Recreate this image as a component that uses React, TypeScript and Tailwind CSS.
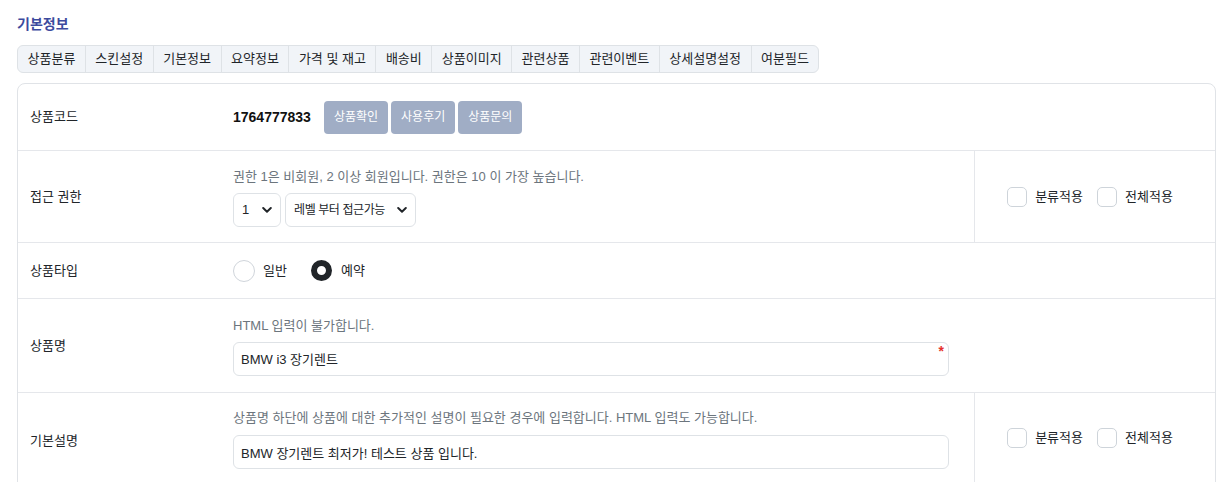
import React from "react";

const tabs = [
  "상품분류",
  "스킨설정",
  "기본정보",
  "요약정보",
  "가격 및 재고",
  "배송비",
  "상품이미지",
  "관련상품",
  "관련이벤트",
  "상세설명설정",
  "여분필드",
];

function Chevron() {
  return (
    <svg width="10" height="7" viewBox="0 0 10 7" className="pointer-events-none absolute right-[9px] top-1/2 -translate-y-1/2">
      <path d="M1.2 1.5 L5 5.2 L8.8 1.5" fill="none" stroke="#212529" strokeWidth="2" strokeLinecap="round" strokeLinejoin="round" />
    </svg>
  );
}

function Select({ value, width, small }: { value: string; width: string; small?: boolean }) {
  return (
    <div className={`relative ${width}`}>
      <select
        defaultValue={value}
        className={`h-[34px] w-full appearance-none rounded-[6px] border border-[#dee2e6] bg-white pl-[8px] pr-[20px] text-[#212529] outline-none ${small ? "text-[12px] tracking-[-0.4px]" : "text-[13px]"}`}
      >
        <option>{value}</option>
      </select>
      <Chevron />
    </div>
  );
}

function Checks() {
  return (
    <div className="flex items-center gap-[14px]">
      <label className="flex items-center gap-[8px] text-[13px] text-[#212529]">
        <span className="inline-block h-[20px] w-[20px] rounded-[5px] border border-[#ced4da] bg-white" />
        <span>분류적용</span>
      </label>
      <label className="flex items-center gap-[8px] text-[13px] text-[#212529]">
        <span className="inline-block h-[20px] w-[20px] rounded-[5px] border border-[#ced4da] bg-white" />
        <span>전체적용</span>
      </label>
    </div>
  );
}

function Label({ children }: { children: React.ReactNode }) {
  return (
    <div className="flex w-[200px] shrink-0 items-center pl-[12px] text-[13px] text-[#212529]">{children}</div>
  );
}

export default function App() {
  return (
    <div
      className="min-h-[482px] bg-white pl-[17px] pr-[5px] pt-[14px]"
      style={{ fontFamily: '"Liberation Sans", "Noto Sans CJK KR", sans-serif' }}
    >
      <h2 className="text-[14px] font-bold leading-5 text-[#3c4a9e]">기본정보</h2>

      <div className="mt-[11px] inline-flex overflow-hidden rounded-[6px] border border-[#dee2e6] bg-[#f1f4f8]">
        {tabs.map((t, i) => (
          <div
            key={t}
            className={`flex h-[26px] items-center px-[9.5px] text-[13px] text-[#212529] ${i > 0 ? "border-l border-[#dee2e6]" : ""}`}
          >
            {t}
          </div>
        ))}
      </div>

      <div className="mt-[10px] overflow-hidden rounded-t-[8px] border border-[#e0e3e7]">
        {/* 상품코드 */}
        <div className="flex h-[67px] border-b border-[#e5e7eb]">
          <Label>상품코드</Label>
          <div className="flex items-center pl-[15px]">
            <span className="mr-[13px] text-[14px] font-bold text-[#111]">1764777833</span>
            <div className="flex gap-[3px]">
              {["상품확인", "사용후기", "상품문의"].map((b) => (
                <button
                  key={b}
                  className="flex h-[33px] items-center rounded-[4px] bg-[#a0adc5] px-[10px] text-[12px] text-white"
                >
                  {b}
                </button>
              ))}
            </div>
          </div>
        </div>

        {/* 접근 권한 */}
        <div className="flex h-[92px] border-b border-[#e5e7eb]">
          <Label>접근 권한</Label>
          <div className="flex flex-1 flex-col justify-center pl-[15px]">
            <div className="text-[13px] leading-5 text-[#6c757d]">
              권한 1은 비회원, 2 이상 회원입니다. 권한은 10 이 가장 높습니다.
            </div>
            <div className="mt-[6px] flex gap-[4px]">
              <Select value="1" width="w-[48px]" />
              <Select value="레벨 부터 접근가능" width="w-[131px]" small />
            </div>
          </div>
          <div className="flex w-[241px] shrink-0 items-center justify-center border-l border-[#e5e7eb] pr-[10px]">
            <Checks />
          </div>
        </div>

        {/* 상품타입 */}
        <div className="flex h-[56px] border-b border-[#e5e7eb]">
          <Label>상품타입</Label>
          <div className="flex items-center pl-[15px] text-[13px] text-[#212529]">
            <label className="flex items-center gap-[8px]">
              <span className="inline-block h-[22px] w-[22px] rounded-full border border-[#d0d5db] bg-white" />
              <span>일반</span>
            </label>
            <label className="ml-[24px] flex items-center gap-[9px]">
              <span className="inline-block h-[21px] w-[21px] rounded-full border-[6px] border-[#212529] bg-white" />
              <span>예약</span>
            </label>
          </div>
        </div>

        {/* 상품명 */}
        <div className="flex h-[94px] border-b border-[#e5e7eb]">
          <Label>상품명</Label>
          <div className="flex flex-1 flex-col justify-center pl-[15px]">
            <div className="text-[13px] leading-5 text-[#6c757d]">HTML 입력이 불가합니다.</div>
            <div className="relative mt-[6px] w-[716px]">
              <input
                readOnly
                value="BMW i3 장기렌트"
                className="h-[34px] w-full rounded-[6px] border border-[#dee2e6] bg-white px-[7px] text-[13px] text-[#212529] outline-none"
              />
              <span className="absolute right-[5px] top-[1px] text-[14px] font-bold leading-4 text-[#e5322d]">*</span>
            </div>
          </div>
        </div>

        {/* 기본설명 */}
        <div className="flex h-[96px]">
          <Label>기본설명</Label>
          <div className="flex flex-1 flex-col pl-[15px] pt-[15px]">
            <div className="text-[13px] leading-5 text-[#6c757d]">
              상품명 하단에 상품에 대한 추가적인 설명이 필요한 경우에 입력합니다. HTML 입력도 가능합니다.
            </div>
            <div className="mt-[7px] w-[716px]">
              <input
                readOnly
                value="BMW 장기렌트 최저가! 테스트 상품 입니다."
                className="h-[34px] w-full rounded-[6px] border border-[#dee2e6] bg-white px-[7px] text-[13px] text-[#212529] outline-none"
              />
            </div>
          </div>
          <div className="flex w-[241px] shrink-0 items-start justify-center border-l border-[#e5e7eb] pr-[10px] pt-[35px]">
            <Checks />
          </div>
        </div>
      </div>
    </div>
  );
}
